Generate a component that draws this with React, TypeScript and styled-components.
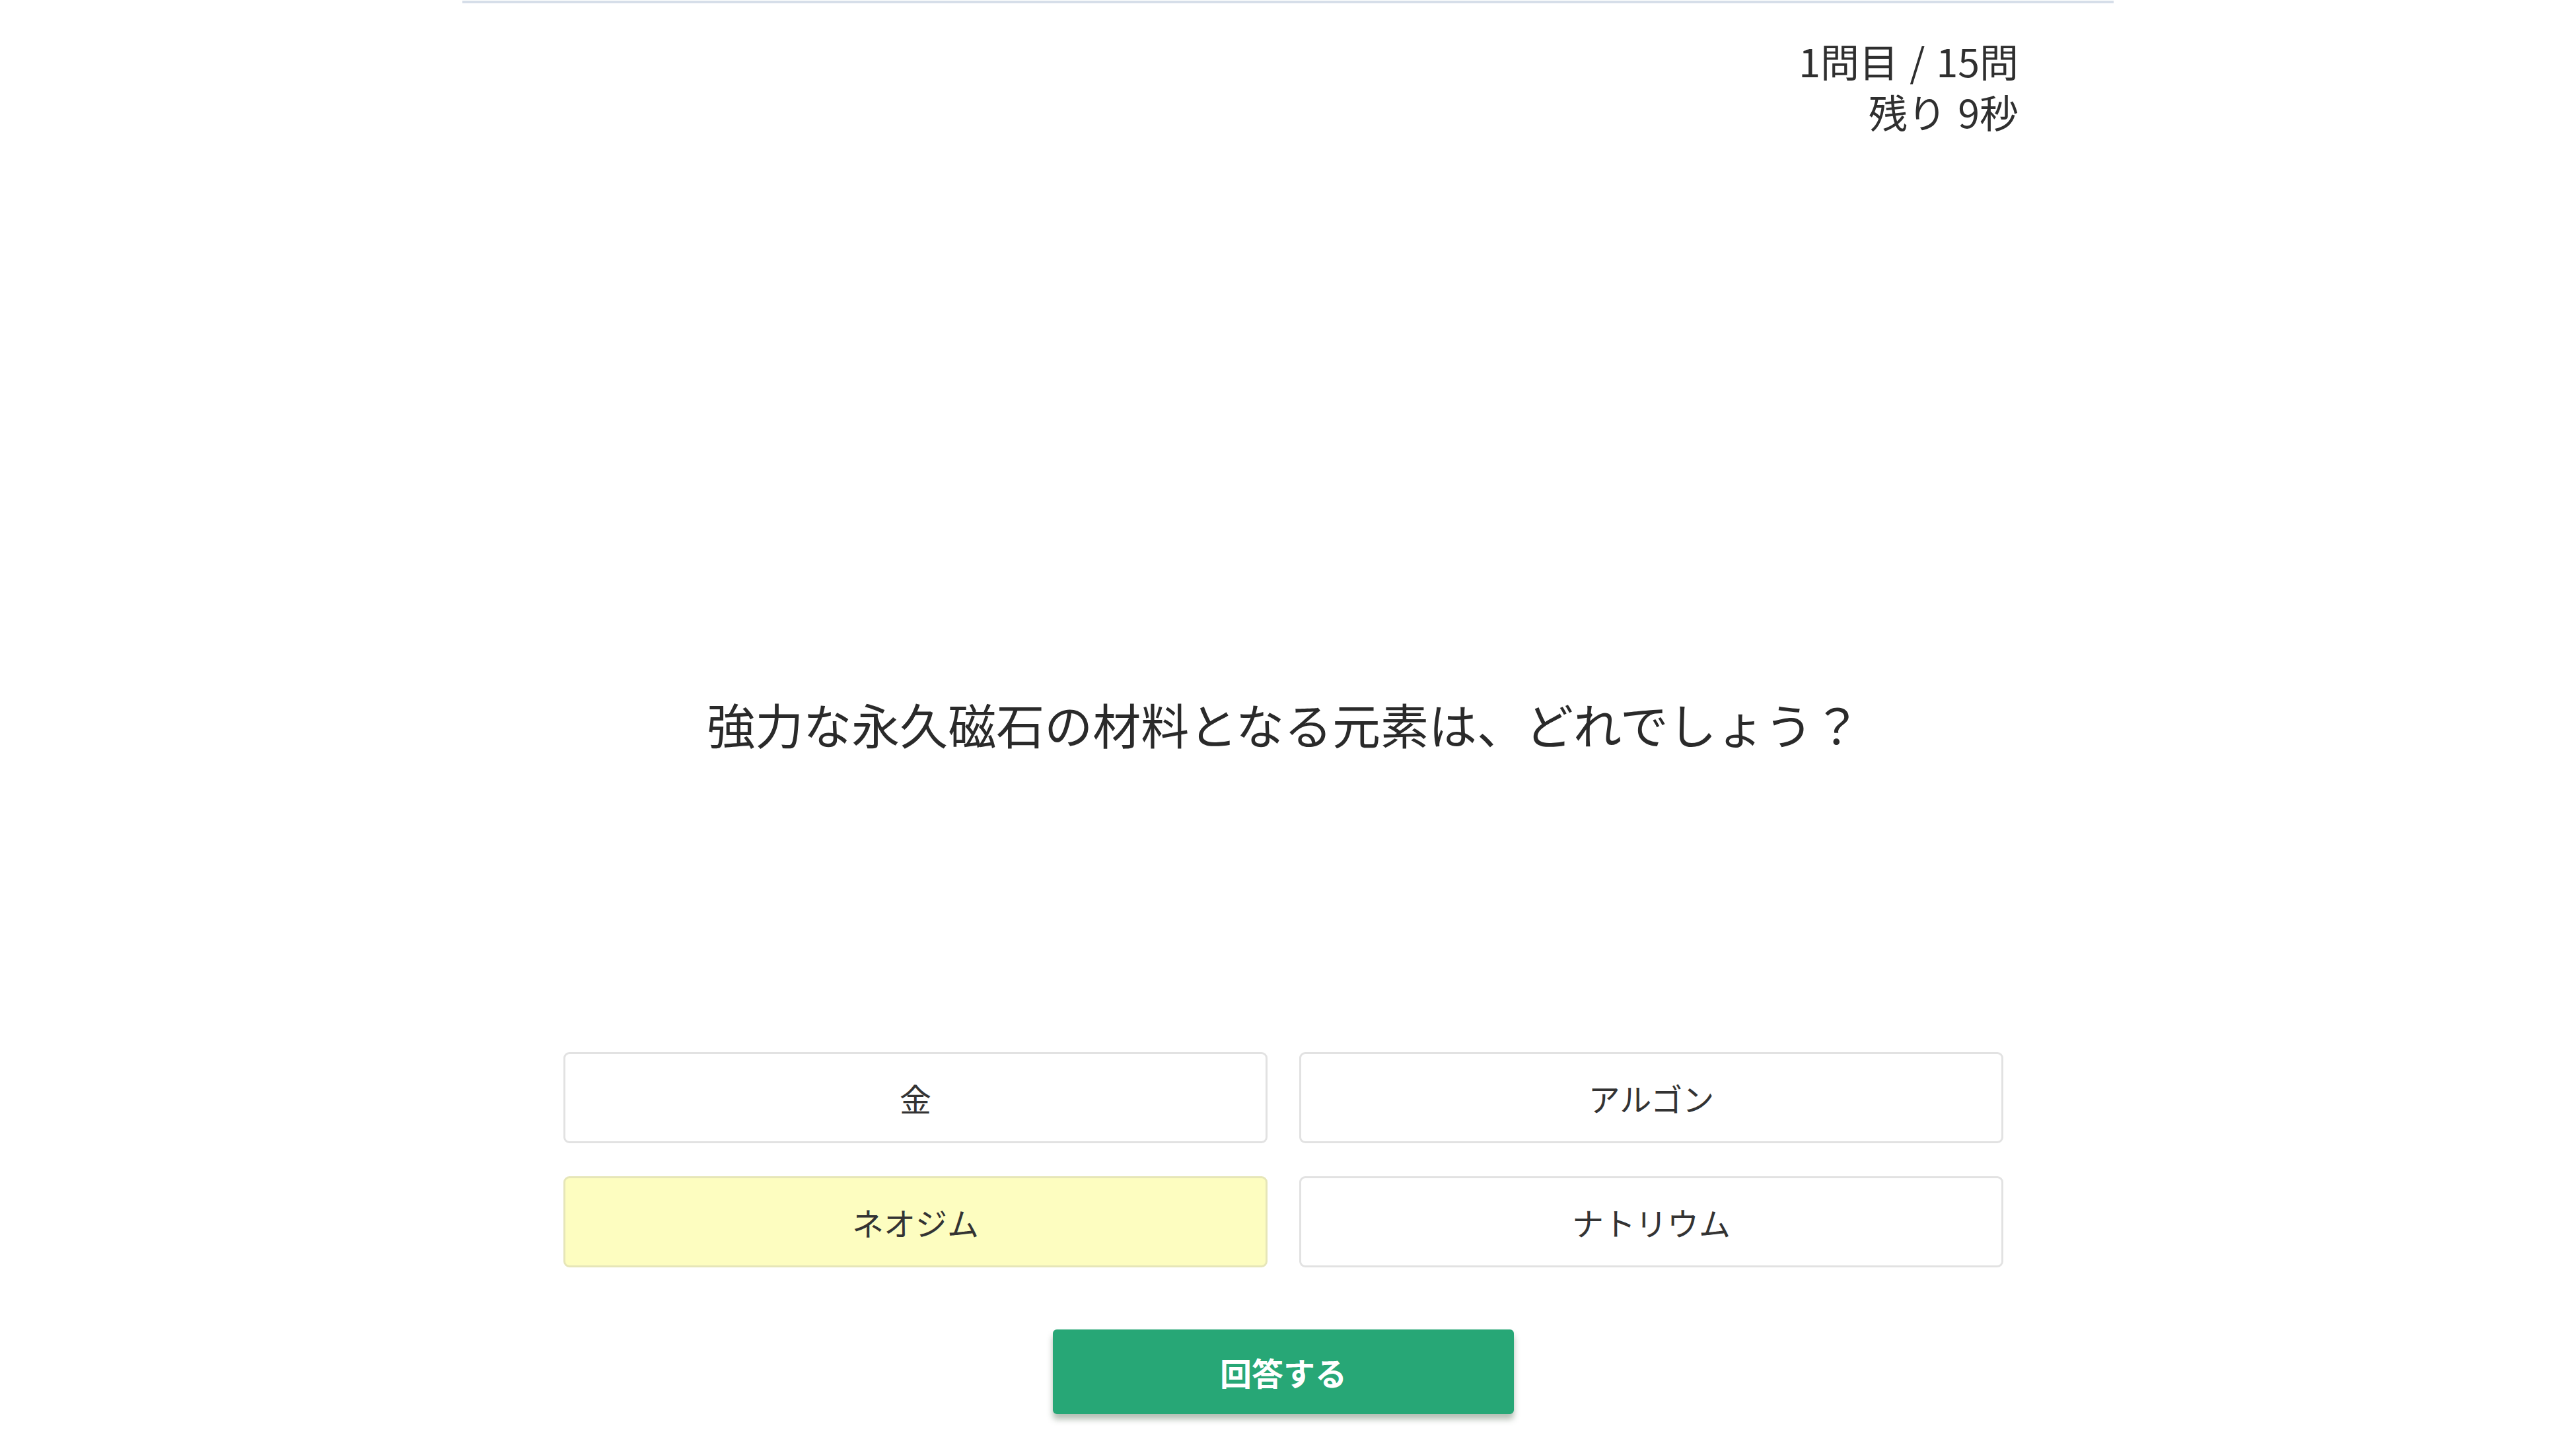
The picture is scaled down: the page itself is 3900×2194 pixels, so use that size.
import styled, { createGlobalStyle } from "styled-components";

const GlobalStyle = createGlobalStyle`
  html, body {
    margin: 0;
    padding: 0;
    background: #ffffff;
  }
  body {
    font-family: "Noto Sans CJK JP", "Noto Sans", sans-serif;
    color: #333333;
  }
`;

const choices = ["金", "アルゴン", "ネオジム", "ナトリウム"];
const selected = 2;

export default function App() {
  return (
    <>
      <GlobalStyle />
      <Page>
        <Status>
          <div>1問目 / 15問</div>
          <div>残り 9秒</div>
        </Status>
        <Question>強力な永久磁石の材料となる元素は、どれでしょう？</Question>
        <Choices>
          {choices.map((c, i) => (
            <Choice key={c} $active={i === selected}>
              {c}
            </Choice>
          ))}
        </Choices>
        <SubmitRow>
          <SubmitButton>回答する</SubmitButton>
        </SubmitRow>
      </Page>
    </>
  );
}

const Page = styled.div`
  width: 2500px;
  margin: 1px auto 0;
  border-top: 4px solid #d6dee9;
  padding-bottom: 40px;
`;

const Status = styled.div`
  text-align: right;
  padding: 48px 144px 0 0;
  font-size: 59px;
  line-height: 77px;
  word-spacing: 4px;
  color: #2f2f2f;
`;

const Question = styled.div`
  margin-top: 834px;
  padding-right: 12px;
  text-align: center;
  font-size: 73px;
  line-height: 108px;
  color: #2a2a2a;
`;

const Choices = styled.div`
  width: 2180px;
  margin: 444px 0 0 153px;
  display: grid;
  grid-template-columns: 1fr 1fr;
  column-gap: 48px;
  row-gap: 50px;
`;

const Choice = styled.button<{ $active?: boolean }>`
  height: 138px;
  display: flex;
  align-items: center;
  justify-content: center;
  font-family: inherit;
  font-size: 48px;
  color: #333333;
  background: ${(p) => (p.$active ? "#fdfdc0" : "#ffffff")};
  border: 3px solid ${(p) => (p.$active ? "#e6e6b8" : "#e2e2e2")};
  border-radius: 9px;
  padding: 0;
`;

const SubmitRow = styled.div`
  display: flex;
  justify-content: center;
  margin-top: 94px;
  padding-right: 14px;
`;

const SubmitButton = styled.button`
  width: 698px;
  height: 128px;
  border: none;
  border-radius: 6px;
  background: #27a776;
  color: #ffffff;
  font-family: inherit;
  font-size: 48px;
  font-weight: 700;
  box-shadow: 0 8px 10px rgba(40, 70, 40, 0.35);
`;
